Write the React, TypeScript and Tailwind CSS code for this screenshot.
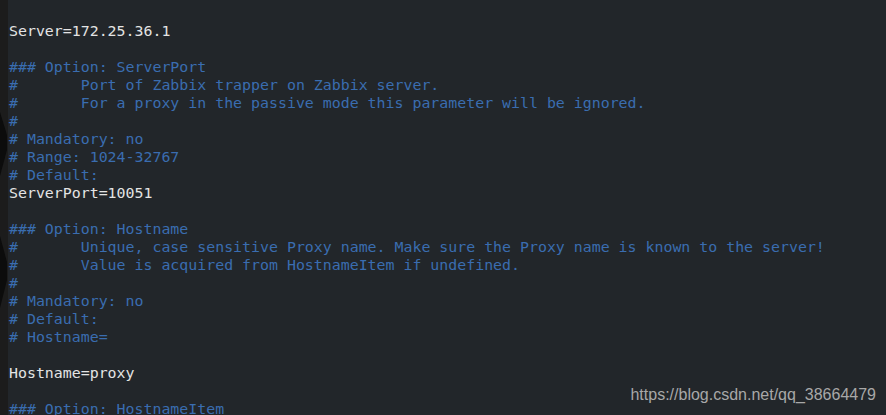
import React from "react";

type Line = { t: string; c?: boolean };

const lines: Line[] = [
  { t: "" },
  { t: "Server=172.25.36.1" },
  { t: "" },
  { t: "### Option: ServerPort", c: true },
  { t: "#       Port of Zabbix trapper on Zabbix server.", c: true },
  { t: "#       For a proxy in the passive mode this parameter will be ignored.", c: true },
  { t: "#", c: true },
  { t: "# Mandatory: no", c: true },
  { t: "# Range: 1024-32767", c: true },
  { t: "# Default:", c: true },
  { t: "ServerPort=10051" },
  { t: "" },
  { t: "### Option: Hostname", c: true },
  { t: "#       Unique, case sensitive Proxy name. Make sure the Proxy name is known to the server!", c: true },
  { t: "#       Value is acquired from HostnameItem if undefined.", c: true },
  { t: "#", c: true },
  { t: "# Mandatory: no", c: true },
  { t: "# Default:", c: true },
  { t: "# Hostname=", c: true },
  { t: "" },
  { t: "Hostname=proxy" },
  { t: "" },
  { t: "### Option: HostnameItem", c: true },
];

export default function App() {
  return (
    <div className="relative flex h-[415px] w-[886px] overflow-hidden bg-[#22262a]">
      <div className="relative w-[8px] shrink-0 bg-[#1c1c1c]">
        <svg className="absolute left-0 top-0" width="8" height="415" viewBox="0 0 8 415">
          <polygon points="0,112 7,135 7,150 0,176" fill="#0c0c0c" />
          <polygon points="0,236 7,262 7,280 0,308" fill="#0c0c0c" />
        </svg>
      </div>
      <div
        className="pl-[1px] pt-[4px] text-[14.9px] leading-[18px] whitespace-pre"
        style={{ fontFamily: '"DejaVu Sans Mono", monospace' }}
      >
        {lines.map((l, i) => (
          <div key={i} className={l.c ? "h-[18px] text-[#3a6db0]" : "h-[18px] text-[#e4e4e4]"}>
            {l.t || " "}
          </div>
        ))}
      </div>
      <div
        className="absolute right-[10px] top-[385px] text-[16px] leading-[20px] text-[#a8a8a8]"
        style={{ fontFamily: '"Liberation Sans", Arial, sans-serif' }}
      >
        https://blog.csdn.net/qq_38664479
      </div>
    </div>
  );
}
